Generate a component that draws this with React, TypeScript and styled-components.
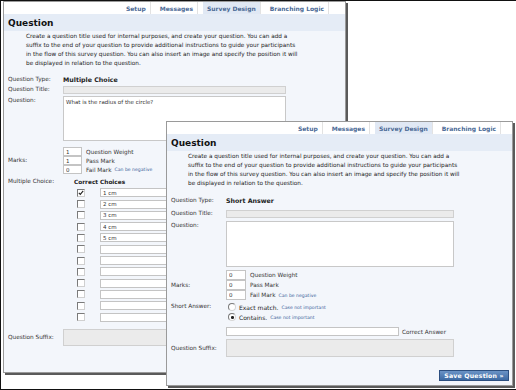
import React from "react";
import styled, { createGlobalStyle } from "styled-components";

const Global = createGlobalStyle`
  html, body { margin: 0; padding: 0; background: #fff; }
  body { font-family: "DejaVu Sans", Verdana, sans-serif; color: #333; }
  * { box-sizing: border-box; }
`;

const Desktop = styled.div`
  position: relative;
  width: 516px;
  height: 390px;
  background: #fff;
  border-left: 1px solid #111;
  border-top: 1px solid #111;
  border-bottom: 1px solid #111;
  overflow: hidden;
`;

const Win = styled.div<{ $x: number; $y: number; $w: number; $h: number }>`
  position: absolute;
  left: ${(p) => p.$x}px;
  top: ${(p) => p.$y}px;
  width: ${(p) => p.$w}px;
  height: ${(p) => p.$h}px;
  background: #f3f6fb;
  border: 1px solid #9a9a9a;
  box-shadow: 2px 2px 0 #5a5a5a;
  display: flex;
  flex-direction: column;
`;

const TabBar = styled.div<{ $pr: number }>`
  height: 12px;
  flex: none;
  background: #fff;
  display: flex;
  justify-content: flex-end;
  padding-right: ${(p) => p.$pr}px;
`;

const Tab = styled.div<{ $active?: boolean }>`
  display: flex;
  align-items: center;
  padding: 0 4px;
  margin-left: 5px;
  font-size: 6px;
  font-weight: bold;
  color: #4b6a96;
  background: ${(p) => (p.$active ? "#e0e8f4" : "transparent")};
  border-right: 1px solid #e2e2e2;
  white-space: nowrap;
`;

const Header = styled.div`
  height: 17px;
  flex: none;
  background: #e5ecf6;
  display: flex;
  align-items: center;
  padding-left: 4px;
  font-size: 9px;
  font-weight: bold;
  color: #111;
`;

const Desc = styled.p<{ $pl: number }>`
  margin: 1px 0 0;
  padding-left: ${(p) => p.$pl}px;
  font-size: 5.75px;
  line-height: 9px;
  color: #222;
  white-space: nowrap;
`;

const Body = styled.div`
  display: flex;
  flex-direction: column;
  padding-left: 4px;
`;

const Row = styled.div<{ $mt?: number; $top?: boolean }>`
  display: flex;
  align-items: ${(p) => (p.$top ? "flex-start" : "center")};
  margin-top: ${(p) => p.$mt ?? 0}px;
`;

const Label = styled.div`
  width: 55px;
  flex: none;
  font-size: 5.75px;
  line-height: 9px;
  color: #333;
  white-space: nowrap;
`;

const Field = styled.div<{ $w: number }>`
  width: ${(p) => p.$w}px;
  flex: none;
  display: flex;
  flex-direction: column;
`;

const Value = styled.div`
  font-size: 6.3px;
  line-height: 9px;
  font-weight: bold;
  color: #222;
  white-space: nowrap;
`;

const Box = styled.input<{ $h: number; $w?: number; $disabled?: boolean }>`
  display: block;
  height: ${(p) => p.$h}px;
  width: ${(p) => (p.$w ? `${p.$w}px` : "100%")};
  margin: 0;
  padding: 0 2px;
  border: 1px solid ${(p) => (p.$disabled ? "#d0d0d0" : "#c4c4c4")};
  background: ${(p) => (p.$disabled ? "#ebebeb" : "#fff")};
  font-family: "DejaVu Sans", Verdana, sans-serif;
  font-size: 5.5px;
  color: #333;
  outline: none;
`;

const Area = styled.textarea<{ $h: number; $disabled?: boolean }>`
  display: block;
  width: 100%;
  height: ${(p) => p.$h}px;
  margin: 0;
  padding: 2px 2px;
  resize: none;
  border: 1px solid ${(p) => (p.$disabled ? "#d0d0d0" : "#c8c8c8")};
  background: ${(p) => (p.$disabled ? "#ebebeb" : "#fff")};
  font-family: "DejaVu Sans", Verdana, sans-serif;
  font-size: 5.5px;
  line-height: 7px;
  color: #333;
  outline: none;
  overflow: hidden;
`;

const MarkLine = styled.div<{ $h: number; $gap: number }>`
  display: flex;
  align-items: center;
  height: ${(p) => p.$h}px;
  & + & {
    margin-top: ${(p) => p.$gap}px;
  }
`;

const InlineText = styled.span`
  font-size: 5.75px;
  color: #333;
  margin-left: 4px;
  white-space: nowrap;
`;

const Hint = styled.span`
  font-size: 4.6px;
  color: #3a5f98;
  margin-left: 3px;
  white-space: nowrap;
`;

const ChoiceHead = styled.div`
  display: flex;
  height: 9px;
  align-items: center;
  font-size: 5.8px;
  font-weight: bold;
  color: #222;
  white-space: nowrap;
`;

const CorrectCol = styled.div`
  width: 37px;
  flex: none;
  padding-left: 11px;
`;

const ChoiceRow = styled.div`
  display: flex;
  align-items: center;
  height: 9px;
  margin-top: 2.3px;
`;

const CheckCell = styled.div`
  width: 37px;
  flex: none;
  padding-left: 14px;
  display: flex;
`;

const Check = styled.span`
  position: relative;
  width: 8px;
  height: 8px;
  display: block;
  background: #fff;
  border: 1px solid;
  border-color: #7a7a7a #d0d0d0 #d0d0d0 #7a7a7a;
`;

const Radio = styled.span`
  position: relative;
  width: 8px;
  height: 8px;
  flex: none;
  display: block;
  margin-left: 2px;
  border-radius: 50%;
  background: #fff;
  border: 1px solid;
  border-color: #7a7a7a #d6d6d6 #d6d6d6 #7a7a7a;
`;

const Dot = styled.span`
  position: absolute;
  left: 2px;
  top: 2px;
  width: 2.5px;
  height: 2.5px;
  border-radius: 50%;
  background: #222;
`;

const RadioText = styled.span`
  font-size: 6px;
  color: #222;
  margin-left: 3px;
  white-space: nowrap;
`;

const ButtonRow = styled.div<{ $mt: number }>`
  display: flex;
  justify-content: flex-end;
  padding-right: 3px;
  margin-top: ${(p) => p.$mt}px;
`;

const SaveButton = styled.button`
  height: 11px;
  width: 70px;
  padding: 0;
  margin: 0;
  border: 1px solid #2c4f80;
  background: linear-gradient(#6b93c6, #3d6aa3);
  color: #fff;
  font-family: "DejaVu Sans", Verdana, sans-serif;
  font-size: 6.2px;
  font-weight: bold;
  letter-spacing: 0.2px;
  white-space: nowrap;
`;

const descLines = [
  "Create a question title used for internal purposes, and create your question. You can add a",
  "suffix to the end of your question to provide additional instructions to guide your participants",
  "in the flow of this survey question. You can also insert an image and specify the position it will",
  "be displayed in relation to the question.",
];

function Tabs({ pr }: { pr: number }) {
  return (
    <TabBar $pr={pr}>
      <Tab>Setup</Tab>
      <Tab>Messages</Tab>
      <Tab $active>Survey Design</Tab>
      <Tab>Branching Logic</Tab>
    </TabBar>
  );
}

function Description({ pl }: { pl: number }) {
  return (
    <Desc $pl={pl}>
      {descLines.map((l, i) => (
        <React.Fragment key={i}>
          {l}
          {i < descLines.length - 1 && <br />}
        </React.Fragment>
      ))}
    </Desc>
  );
}

const CheckMark = () => (
  <svg width="6" height="6" viewBox="0 0 6 6" style={{ position: "absolute", left: 0, top: 0 }}>
    <path d="M0.8 2.8 L2.3 4.4 L5.2 0.9" fill="none" stroke="#222" strokeWidth="1.1" />
  </svg>
);

const choices = ["1 cm", "2 cm", "3 cm", "4 cm", "5 cm", "", "", "", "", "", "", ""];

function MultipleChoiceWindow() {
  const fw = 223;
  return (
    <Win $x={2} $y={0} $w={343} $h={372}>
      <Tabs pr={16} />
      <Header>Question</Header>
      <Description pl={22} />
      <Body>
        <Row $mt={7}>
          <Label>Question Type:</Label>
          <Value>Multiple Choice</Value>
        </Row>
        <Row $mt={1}>
          <Label>Question Title:</Label>
          <Field $w={fw}>
            <Box $h={8} $disabled readOnly value="" />
          </Field>
        </Row>
        <Row $mt={2} $top>
          <Label>Question:</Label>
          <Field $w={fw}>
            <Area $h={45} readOnly value="What is the radius of the circle?" />
          </Field>
        </Row>
        <Row $mt={6}>
          <Label>Marks:</Label>
          <Field $w={fw}>
            <MarkLine $h={9} $gap={1}>
              <Box $h={9} $w={19} readOnly value="1" />
              <InlineText>Question Weight</InlineText>
            </MarkLine>
            <MarkLine $h={9} $gap={1}>
              <Box $h={9} $w={19} readOnly value="1" />
              <InlineText>Pass Mark</InlineText>
            </MarkLine>
            <MarkLine $h={9} $gap={1}>
              <Box $h={9} $w={19} readOnly value="0" />
              <InlineText>Fail Mark</InlineText>
              <Hint>Can be negative</Hint>
            </MarkLine>
          </Field>
        </Row>
        <Row $mt={3} $top>
          <Label>Multiple Choice:</Label>
          <Field $w={fw}>
            <ChoiceHead>
              <CorrectCol>Correct</CorrectCol>
              <span>Choices</span>
            </ChoiceHead>
            {choices.map((c, i) => (
              <ChoiceRow key={i}>
                <CheckCell>
                  <Check>{i === 0 && <CheckMark />}</Check>
                </CheckCell>
                <Box $h={9} $w={130} readOnly value={c} />
              </ChoiceRow>
            ))}
          </Field>
        </Row>
        <Row $mt={7}>
          <Label>Question Suffix:</Label>
          <Field $w={fw}>
            <Area $h={17} $disabled readOnly value="" />
          </Field>
        </Row>
      </Body>
    </Win>
  );
}

function ShortAnswerWindow() {
  const fw = 228;
  return (
    <Win $x={165} $y={120} $w={347} $h={265}>
      <Tabs pr={11} />
      <Header>Question</Header>
      <Description pl={21} />
      <Body>
        <Row $mt={8}>
          <Label>Question Type:</Label>
          <Value>Short Answer</Value>
        </Row>
        <Row $mt={4}>
          <Label>Question Title:</Label>
          <Field $w={fw}>
            <Box $h={8} $disabled readOnly value="" />
          </Field>
        </Row>
        <Row $mt={3} $top>
          <Label>Question:</Label>
          <Field $w={fw}>
            <Area $h={46} readOnly value="" />
          </Field>
        </Row>
        <Row $mt={3}>
          <Label>Marks:</Label>
          <Field $w={fw}>
            <MarkLine $h={10} $gap={1}>
              <Box $h={10} $w={20} readOnly value="0" />
              <InlineText>Question Weight</InlineText>
            </MarkLine>
            <MarkLine $h={10} $gap={1}>
              <Box $h={10} $w={20} readOnly value="0" />
              <InlineText>Pass Mark</InlineText>
            </MarkLine>
            <MarkLine $h={10} $gap={1}>
              <Box $h={10} $w={20} readOnly value="0" />
              <InlineText>Fail Mark</InlineText>
              <Hint>Can be negative</Hint>
            </MarkLine>
          </Field>
        </Row>
        <Row $mt={2} $top>
          <Label>Short Answer:</Label>
          <Field $w={fw}>
            <MarkLine $h={10} $gap={1}>
              <Radio />
              <RadioText>Exact match.</RadioText>
              <Hint>Case not important</Hint>
            </MarkLine>
            <MarkLine $h={10} $gap={1}>
              <Radio>
                <Dot />
              </Radio>
              <RadioText>Contains.</RadioText>
              <Hint>Case not important</Hint>
            </MarkLine>
          </Field>
        </Row>
        <Row $mt={5}>
          <Label />
          <Field $w={fw}>
            <MarkLine $h={9} $gap={0}>
              <Box $h={9} $w={173} readOnly value="" />
              <InlineText style={{ marginLeft: 3 }}>Correct Answer</InlineText>
            </MarkLine>
          </Field>
        </Row>
        <Row $mt={3}>
          <Label>Question Suffix:</Label>
          <Field $w={fw}>
            <Area $h={18} $disabled readOnly value="" />
          </Field>
        </Row>
      </Body>
      <ButtonRow $mt={13}>
        <SaveButton>Save Question »</SaveButton>
      </ButtonRow>
    </Win>
  );
}

export default function App() {
  return (
    <>
      <Global />
      <Desktop>
        <MultipleChoiceWindow />
        <ShortAnswerWindow />
      </Desktop>
    </>
  );
}
